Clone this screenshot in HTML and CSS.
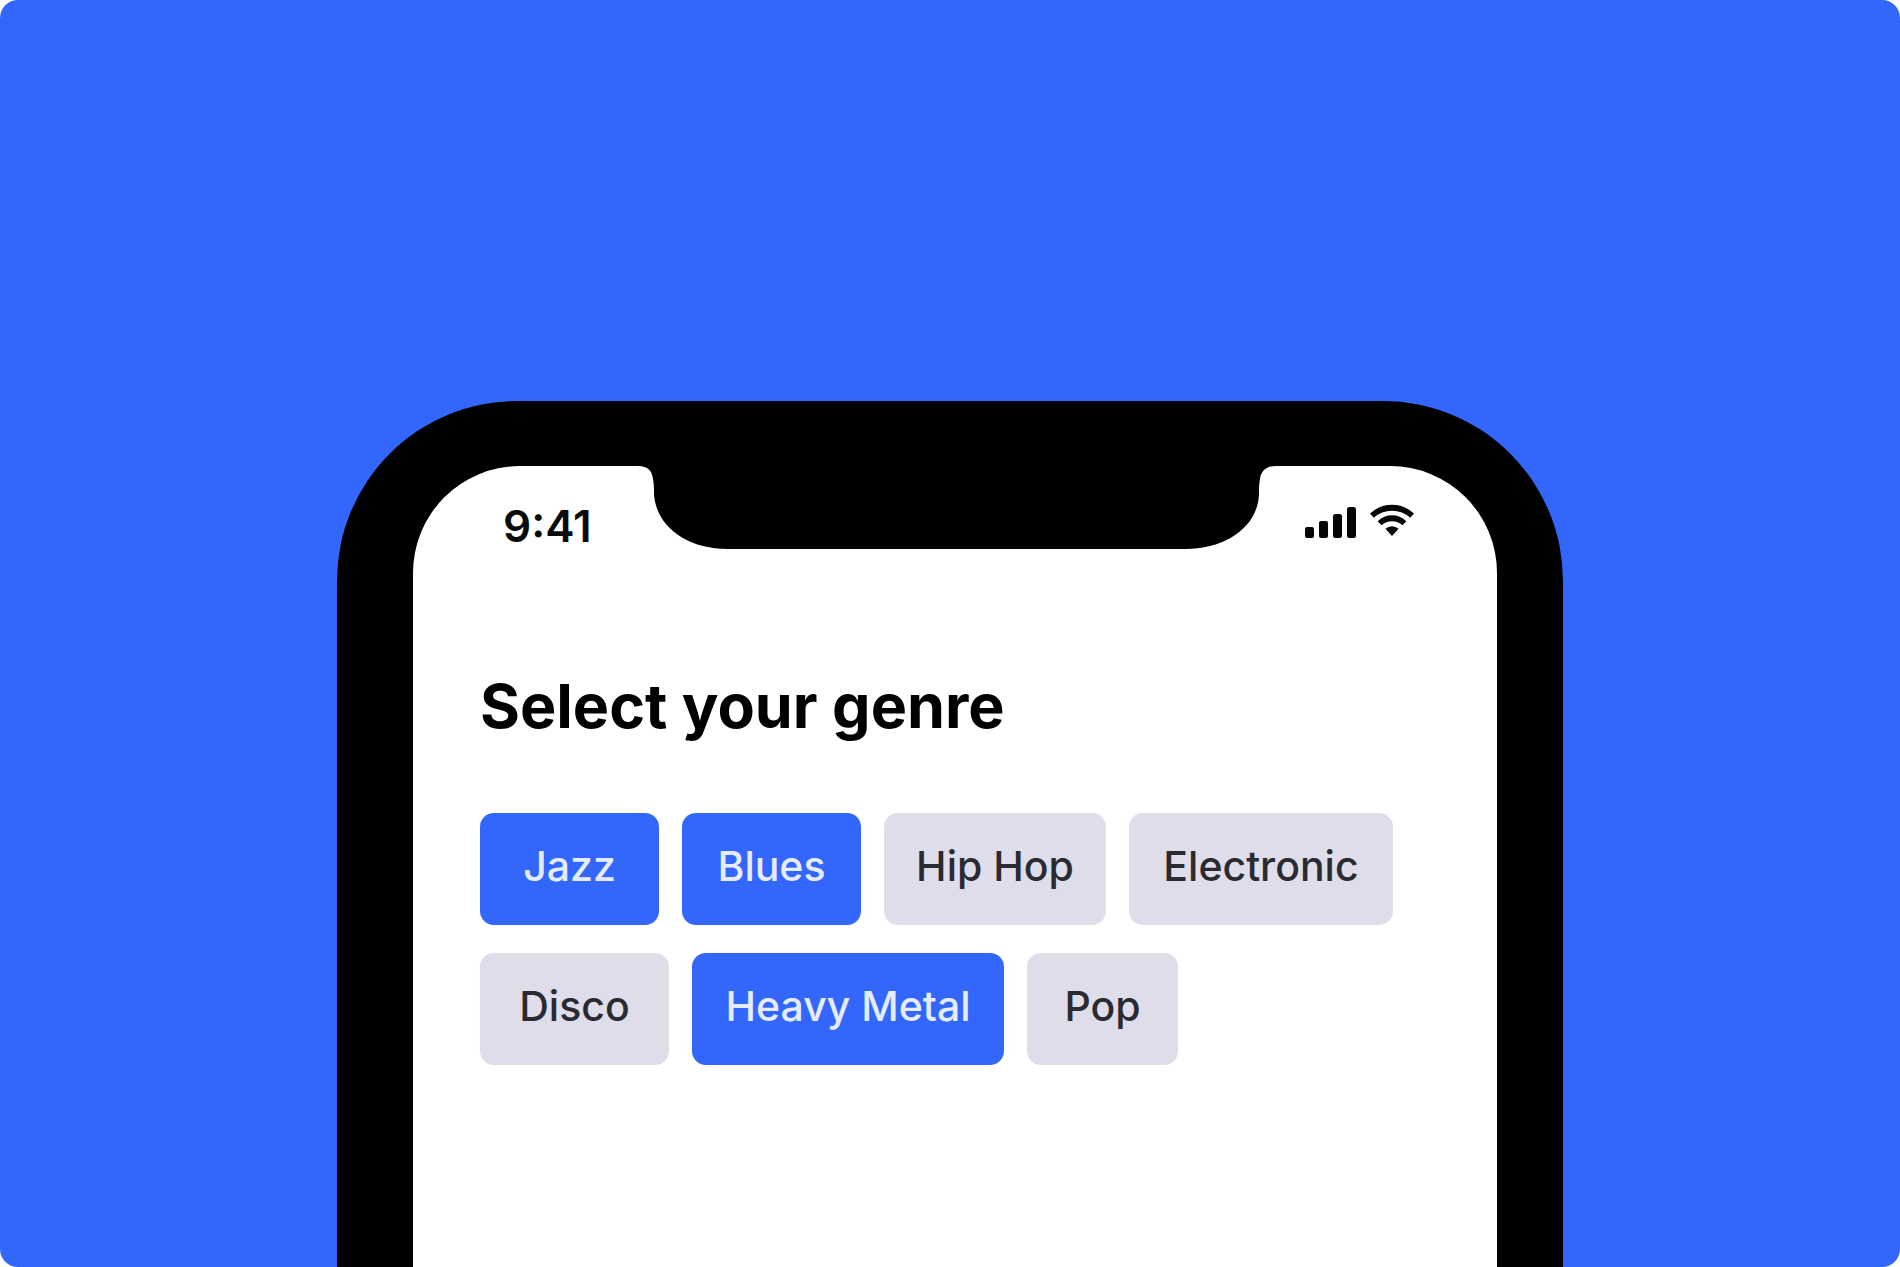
FILE: index.html
```html
<!DOCTYPE html>
<html lang="en">
<head>
<meta charset="utf-8">
<meta name="viewport" content="width=device-width, initial-scale=1">
<title>Select your genre</title>
<link rel="stylesheet" href="styles.css">
</head>
<body>
<div class="stage">
  <div class="phone">
    <main class="screen">
      <div class="status">
        <time class="clock">9:41</time>
        <svg class="notch" viewBox="0 0 638 83" aria-hidden="true">
          <path d="M0 0C10 0 14 5 15 13C16 19 16 22 16 28C18 60 48 83 90 83H547C589 83 620 60 621 28C621 22 621 19 622 13C623 5 628 0 638 0Z"/>
        </svg>
        <div class="indicators">
          <svg class="icon" viewBox="0 0 51 34" width="51" height="34" role="img" aria-label="Signal">
            <rect x="0" y="23" width="9" height="11" rx="2"/>
            <rect x="14" y="17" width="9" height="17" rx="2"/>
            <rect x="28" y="10" width="9" height="24" rx="2.5"/>
            <rect x="42" y="3" width="9" height="31" rx="2.5"/>
          </svg>
          <svg class="icon" viewBox="0 0 44 34" width="44" height="34" role="img" aria-label="Wi-Fi">
            <path d="M0 9.500Q9.500 .8 22 .8T44 9.500L40.300 13.700Q32.500 6.700 22 6.700T3.700 13.700Z"/>
            <path d="M7.700 17.200Q14 11.300 22 11.300T36.300 17.200L32.400 21.300Q28 17.300 22 17.300T11.600 21.300Z"/>
            <path d="M15.400 24.700Q18 22.200 22 22.200T28.600 24.700L22 32Z"/>
          </svg>
        </div>
      </div>
      <section class="content">
        <h1 class="title" id="genre-title">Select your genre</h1>
        <div class="chips" role="group" aria-labelledby="genre-title">
          <button class="chip chip-short" type="button" aria-pressed="true">Jazz</button>
          <button class="chip chip-short" type="button" aria-pressed="true">Blues</button>
          <button class="chip chip-wide" type="button" aria-pressed="false">Hip Hop</button>
          <button class="chip chip-wider" type="button" aria-pressed="false">Electronic</button>
          <button class="chip chip-medium" type="button" aria-pressed="false">Disco</button>
          <button class="chip chip-widest" type="button" aria-pressed="true">Heavy Metal</button>
          <button class="chip chip-tiny" type="button" aria-pressed="false">Pop</button>
        </div>
      </section>
    </main>
  </div>
</div>
</body>
</html>
```
FILE: styles.css
```css
* {
  box-sizing: border-box;
}

body {
  margin: 0;
  background: #fff;
  font-family: Inter, "Liberation Sans", sans-serif;
}

.stage {
  display: flex;
  justify-content: center;
  min-height: 100vh;
  padding-top: 401px;
  border-radius: 18px;
  background: #3366fb;
}

.phone {
  display: flex;
  width: 100%;
  max-width: 1226px;
  padding: 65px 66px 0 76px;
  border-radius: 180px 180px 0 0;
  background: #000;
}

.screen {
  flex: 1;
  border-radius: 107px 107px 0 0;
  background: #fff;
}

.status {
  display: grid;
  grid-template-columns: 225px 1fr 221px;
}

.clock {
  padding: 32px 0 0 90px;
  font-size: 44px;
  font-weight: 600;
  line-height: 56px;
  color: #0a0a0a;
}

.notch {
  display: block;
  width: 100%;
}

.indicators {
  display: flex;
  gap: 14px;
  padding: 38px 0 0 29px;
}

.icon {
  display: block;
  fill: #060606;
}

.content {
  padding: 116px 67px 0;
}

.title {
  margin: 0;
  font-size: 61px;
  font-weight: 700;
  line-height: 72px;
  color: #000;
}

.chips {
  display: flex;
  flex-wrap: wrap;
  gap: 28px 23px;
  margin-top: 71px;
}

.chip {
  height: 112px;
  padding: 0 0 6px;
  border: 0;
  border-radius: 14px;
  background: #dedde9;
  color: #2a2a31;
  font: 500 41px/56px Inter, "Liberation Sans", sans-serif;
  white-space: nowrap;
  cursor: pointer;
}

.chip[aria-pressed="true"] {
  background: #3366fb;
  color: #e6ecff;
}

.chip-tiny {
  width: 151px;
}

.chip-short {
  width: 179px;
}

.chip-medium {
  width: 189px;
}

.chip-wide {
  width: 222px;
}

.chip-wider {
  width: 264px;
}

.chip-widest {
  width: 312px;
}
```
